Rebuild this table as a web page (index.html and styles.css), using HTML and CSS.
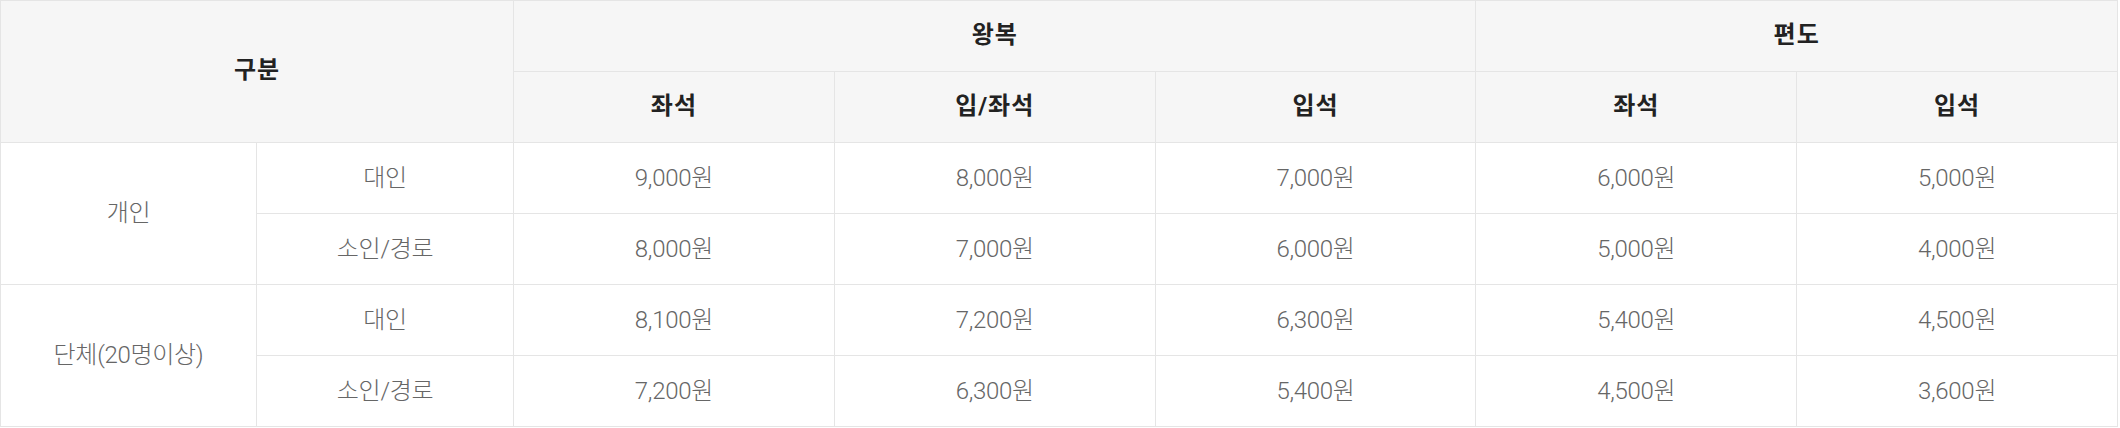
FILE: index.html
```html
<!DOCTYPE html>
<html lang="ko">
<head>
<meta charset="utf-8">
<link rel="stylesheet" href="styles.css">
</head>
<body>
<table class="fare">
  <colgroup>
    <col class="c-a"><col class="c-b"><col class="c-p"><col class="c-p"><col class="c-p"><col class="c-p"><col class="c-p">
  </colgroup>
  <thead>
    <tr>
      <th colspan="2" rowspan="2">구분</th>
      <th colspan="3">왕복</th>
      <th colspan="2">편도</th>
    </tr>
    <tr>
      <th>좌석</th><th>입/좌석</th><th>입석</th><th>좌석</th><th>입석</th>
    </tr>
  </thead>
  <tbody>
    <tr>
      <td rowspan="2">개인</td><td>대인</td>
      <td>9,000원</td><td>8,000원</td><td>7,000원</td><td>6,000원</td><td>5,000원</td>
    </tr>
    <tr>
      <td>소인/경로</td>
      <td>8,000원</td><td>7,000원</td><td>6,000원</td><td>5,000원</td><td>4,000원</td>
    </tr>
    <tr>
      <td rowspan="2">단체(20명이상)</td><td>대인</td>
      <td>8,100원</td><td>7,200원</td><td>6,300원</td><td>5,400원</td><td>4,500원</td>
    </tr>
    <tr>
      <td>소인/경로</td>
      <td>7,200원</td><td>6,300원</td><td>5,400원</td><td>4,500원</td><td>3,600원</td>
    </tr>
  </tbody>
</table>
</body>
</html>
```
FILE: styles.css
```css
html, body {
  margin: 0;
  padding: 0;
  background: #ffffff;
}
.fare {
  width: 2118px;
  border-collapse: collapse;
  table-layout: fixed;
  font-family: "Roboto", "Noto Sans CJK KR", sans-serif;
}
.c-a { width: 256px; }
.c-b { width: 257px; }
.fare th,
.fare td {
  border: 1px solid #e5e5e5;
  text-align: center;
  vertical-align: middle;
  padding: 0 0 6px 0;
}
.fare tr {
  height: 71px;
}
.fare th {
  background: #f6f6f6;
  color: #222222;
  font-size: 24px;
  font-weight: 700;
  letter-spacing: 1px;
  padding-bottom: 8px;
}
.fare td {
  color: #666666;
  font-size: 24px;
  font-weight: 300;
  letter-spacing: -0.3px;
}
```
